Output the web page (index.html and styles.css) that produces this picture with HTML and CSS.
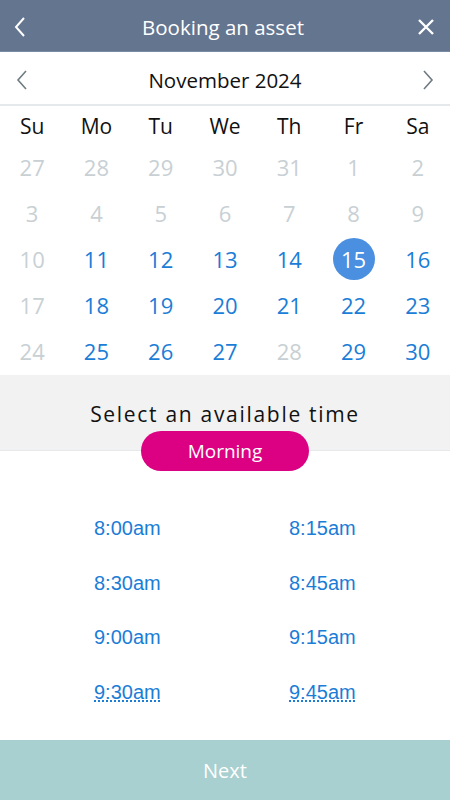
FILE: index.html
```html
<!DOCTYPE html>
<html lang="en">
<head>
    <meta charset="UTF-8">
    <meta name="viewport" content="width=device-width, initial-scale=1.0">
    <title>Booking an asset</title>
    <link rel="stylesheet" href="styles.css">
</head>
<body>
    <div class="screen">
        <header class="topbar">
            <button class="icon-btn" aria-label="Back">
                <svg width="14" height="22" viewBox="0 0 14 22"><path d="M11 2 L3 11 L11 20" fill="none" stroke="#fff" stroke-width="2"/></svg>
            </button>
            <h1>Booking an asset</h1>
            <button class="icon-btn" aria-label="Close">
                <svg width="18" height="18" viewBox="0 0 18 18"><path d="M2 2 L16 16 M16 2 L2 16" fill="none" stroke="#fff" stroke-width="2.4"/></svg>
            </button>
        </header>

        <div class="month-nav">
            <button class="icon-btn" aria-label="Previous month">
                <svg width="14" height="22" viewBox="0 0 14 22"><path d="M11 2 L3 11 L11 20" fill="none" stroke="#6f7b82" stroke-width="1.6"/></svg>
            </button>
            <div class="month-title">November 2024</div>
            <button class="icon-btn" aria-label="Next month">
                <svg width="14" height="22" viewBox="0 0 14 22"><path d="M3 2 L11 11 L3 20" fill="none" stroke="#6f7b82" stroke-width="1.6"/></svg>
            </button>
        </div>

        <div class="calendar">
            <div class="weekdays">
                <span>Su</span><span>Mo</span><span>Tu</span><span>We</span><span>Th</span><span>Fr</span><span>Sa</span>
            </div>
            <div class="days" id="days"></div>
        </div>

        <div class="time-head">
            <div class="time-title">Select an available time</div>
            <div class="period-pill">Morning</div>
        </div>

        <div class="times">
            <a class="slot">8:00am</a>
            <a class="slot">8:15am</a>
            <a class="slot">8:30am</a>
            <a class="slot">8:45am</a>
            <a class="slot">9:00am</a>
            <a class="slot">9:15am</a>
            <a class="slot cut">9:30am</a>
            <a class="slot cut">9:45am</a>
        </div>

        <button class="next-btn">Next</button>
    </div>

    <script>
        document.addEventListener('DOMContentLoaded', function() {
            // 27 Oct .. 30 Nov, unavailable days kept grey
            const days = [27, 28, 29, 30, 31];
            for (let d = 1; d <= 30; d++) days.push(d);
            const unavailable = [1, 2, 3, 4, 5, 6, 7, 8, 9, 10, 17, 24, 28];
            const grid = document.getElementById('days');

            days.forEach(function(day, i) {
                const cell = document.createElement('span');
                cell.className = 'day';
                if (i < 5 || unavailable.indexOf(day) !== -1) {
                    cell.classList.add('off');
                }
                if (i >= 5 && day === 15) {
                    cell.classList.add('selected');
                }
                const label = document.createElement('span');
                label.className = 'day-num';
                label.textContent = day;
                cell.appendChild(label);
                grid.appendChild(cell);
            });
        });
    </script>
</body>
</html>
```

FILE: styles.css
```css
body {
    margin: 0;
    font-family: 'Open Sans', 'Noto Sans', sans-serif;
    background-color: #fff;
}

.screen {
    width: 450px;
    height: 800px;
    display: flex;
    flex-direction: column;
    overflow: hidden;
}

.icon-btn {
    background: none;
    border: none;
    padding: 0;
    width: 40px;
    height: 40px;
    display: flex;
    align-items: center;
    justify-content: center;
    cursor: pointer;
}

.topbar {
    height: 52px;
    box-sizing: border-box;
    background-color: #647590;
    border-bottom: 1px solid #7a8aa2;
    display: flex;
    align-items: center;
    justify-content: space-between;
    padding: 2px 4px 0 0;
}

.topbar h1 {
    margin: 0;
    font-size: 20.5px;
    font-weight: 400;
    color: #fff;
}

.month-nav {
    height: 54px;
    box-sizing: border-box;
    border-bottom: 2px solid #e6e9ec;
    display: flex;
    align-items: center;
    justify-content: space-between;
    padding: 3px 2px 0 2px;
}

.month-title {
    font-size: 20.5px;
    color: #111;
}

.weekdays,
.days {
    display: grid;
    grid-template-columns: repeat(7, 1fr);
    text-align: center;
}

.weekdays span {
    height: 38px;
    line-height: 40px;
    font-size: 21px;
    color: #111;
}

.day {
    height: 46px;
    display: flex;
    align-items: center;
    justify-content: center;
    font-size: 22px;
    color: #1a7dd7;
}

.day.off {
    color: #c8d0d4;
}

.day-num {
    width: 42px;
    height: 42px;
    line-height: 42px;
    border-radius: 50%;
}

.day.selected .day-num {
    background-color: #4a8fe0;
    color: #fff;
}

.time-head {
    margin-top: 1px;
    background-color: #f2f2f2;
    border-bottom: 1px solid #e6e9ec;
    padding-top: 24px;
    display: flex;
    flex-direction: column;
    align-items: center;
}

.time-title {
    height: 28px;
    line-height: 30px;
    font-size: 21px;
    letter-spacing: 1.7px;
    color: #111;
}

.period-pill {
    margin-top: 4px;
    margin-bottom: -21px;
    width: 168px;
    height: 40px;
    line-height: 40px;
    border-radius: 20px;
    background-color: #dc0082;
    color: #fff;
    text-align: center;
    font-size: 19px;
}

.times {
    flex: 1;
    display: grid;
    grid-template-columns: 195px 195px;
    grid-auto-rows: 54.5px;
    align-content: start;
    padding: 50px 0 0 94px;
}

.slot {
    font-family: 'Liberation Sans', Arial, sans-serif;
    font-size: 20px;
    color: #1a7dd7;
    line-height: 54px;
    cursor: pointer;
}

.slot.cut {
    text-decoration: underline dotted #1a7dd7;
    text-underline-offset: 2px;
}

.next-btn {
    height: 60px;
    border: none;
    background-color: #a8d0d0;
    color: #fff;
    font-family: 'Open Sans', 'Noto Sans', sans-serif;
    font-size: 20px;
    cursor: pointer;
}
```
